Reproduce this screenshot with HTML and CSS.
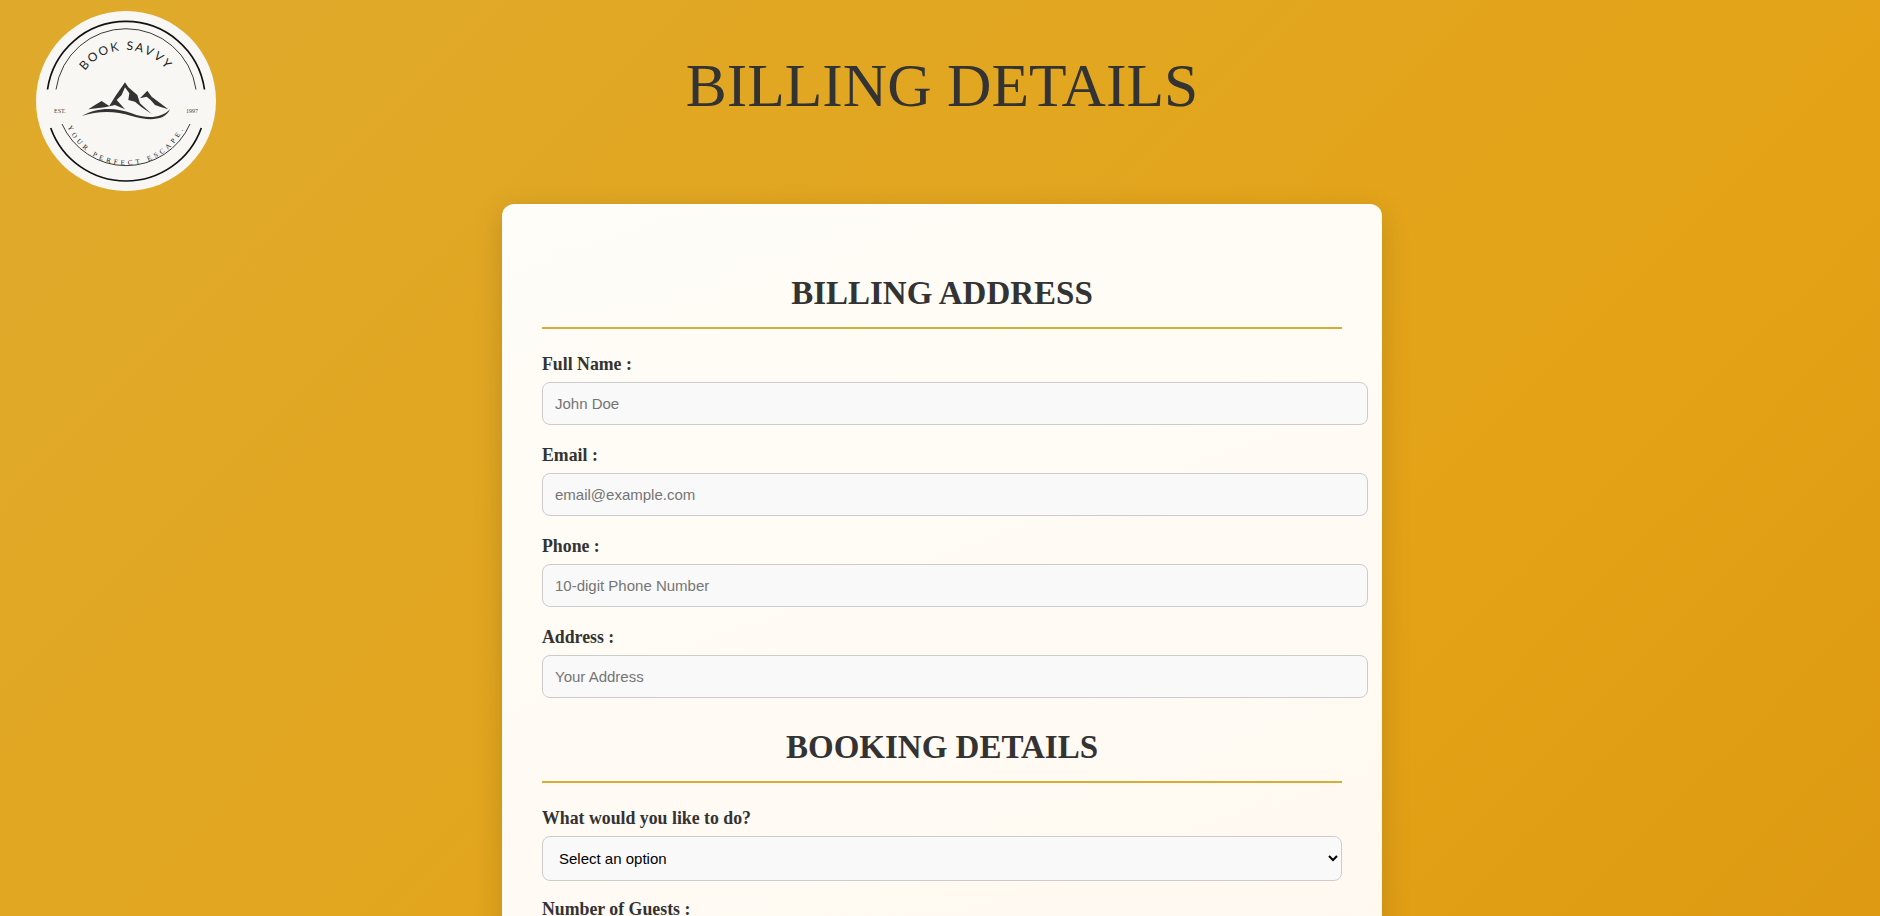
FILE: index.html
```html
<!DOCTYPE html>
<html lang="en">
<head>
<meta charset="utf-8">
<title>Billing Details</title>
<link rel="stylesheet" href="styles.css">
</head>
<body>
<div class="logo">
  <svg viewBox="0 0 180 180" width="180" height="180" class="logo-svg">
    <defs>
      <path id="arcTop" d="M 39 90 A 51 51 0 0 1 141 90"/>
      <path id="arcBottom" d="M 26 90 A 64 64 0 0 0 154 90"/>
    </defs>
    <circle cx="90" cy="90" r="90" fill="#f8f7f4"/>
    <path d="M 11.5 78.5 A 79.3 79.3 0 0 1 168.5 78.5" fill="none" stroke="#111" stroke-width="1.7"/>
    <path d="M 20 78.5 A 70.7 70.7 0 0 1 160 78.5" fill="none" stroke="#222" stroke-width="0.9"/>
    <path d="M 14.7 117 A 80 80 0 0 0 165.3 117" fill="none" stroke="#111" stroke-width="1.7"/>
    <path d="M 26 113 A 70 70 0 0 0 154 113" fill="none" stroke="#222" stroke-width="0.9"/>
    <text class="logo-top"><textPath href="#arcTop" startOffset="50%" text-anchor="middle">BOOK SAVVY</textPath></text>
    <text class="logo-bottom"><textPath href="#arcBottom" startOffset="50%" text-anchor="middle">YOUR PERFECT ESCAPE.</textPath></text>
    <text class="logo-small" x="18" y="101.5">EST.</text>
    <text class="logo-small" x="150" y="101.5">1997</text>
    <g transform="translate(24 39) scale(0.3333)" fill="#333">
      <path d="M85 178 L105 165 L125 153 L135 160 L148 168 L165 140 L195 97 L205 112 L232 135 L240 160 L275 192 L245 172 L225 155 L205 150 L208 130 L195 112 L185 135 L170 150 L195 178 L165 165 L135 172 L110 175 Z"/>
      <path d="M240 145 L262 122 L275 140 L295 155 L325 178 L300 170 L285 165 L272 150 L260 140 Z"/>
      <path d="M65 198 C 110 170 170 172 215 190 C 260 208 305 205 330 178 C 315 215 260 212 215 198 C 165 182 115 182 65 198 Z"/>
    </g>
  </svg>
</div>
<h1 class="page-title">BILLING DETAILS</h1>
<form class="card">
  <h2 class="section-title">BILLING ADDRESS</h2>
  <div class="field"><label class="label" for="name">Full Name :</label><input class="input" id="name" type="text" placeholder="John Doe"></div>
  <div class="field"><label class="label" for="email">Email :</label><input class="input" id="email" type="text" placeholder="email@example.com"></div>
  <div class="field"><label class="label" for="phone">Phone :</label><input class="input" id="phone" type="text" placeholder="10-digit Phone Number"></div>
  <div class="field"><label class="label" for="address">Address :</label><input class="input" id="address" type="text" placeholder="Your Address"></div>
  <h2 class="section-title section-title-next">BOOKING DETAILS</h2>
  <div class="field field-select"><label class="label" for="action">What would you like to do?</label>
    <select class="select" id="action"><option>Select an option</option></select></div>
  <div class="field"><label class="label" for="guests">Number of Guests :</label><input class="input" id="guests" type="text"></div>
</form>
</body>
</html>
```
FILE: styles.css
```css
* { margin: 0; }
html { overflow: hidden; height: 100%; }
body {
  height: 916px;
  padding-left: 4px;
  overflow: hidden;
  background: linear-gradient(135deg, #dfaa2c 0%, #e4a317 70%, #dd9a12 100%);
  font-family: "Liberation Serif", serif;
  color: #333;
  position: relative;
}
.logo { position: absolute; left: 36px; top: 11px; width: 180px; height: 180px; }
.logo-svg { display: block; }
.logo-top { font: 12px Lato, sans-serif; letter-spacing: 2px; fill: #222; }
.logo-bottom { font: 7px "Liberation Serif", serif; letter-spacing: 3.3px; fill: #222; }
.logo-small { font: 6px "Liberation Serif", serif; fill: #444; }
.page-title {
  font-family: "Liberation Serif", serif;
  font-weight: 400;
  font-size: 61.5px;
  line-height: 74px;
  text-align: center;
  padding-top: 48px;
  height: 204px;
  box-sizing: border-box;
  color: #333;
}
.card {
  width: 880px;
  margin: 0 auto;
  padding: 70px 40px 40px;
  box-sizing: border-box;
  background: linear-gradient(160deg, #fffdf8, #fff8f0);
  border-radius: 12px;
  box-shadow: 0 8px 30px rgba(0, 0, 0, 0.15);
}
.section-title {
  font-family: "Liberation Serif", serif;
  font-weight: 700;
  font-size: 33px;
  line-height: 38px;
  text-align: center;
  color: #333;
  padding-bottom: 15px;
  border-bottom: 2px solid #d4af37;
  margin-bottom: 25px;
}
.section-title-next { margin-top: 30px; }
.field { margin-bottom: 20px; }
.field-select { margin-bottom: 18px; }
.label {
  display: block;
  font-family: "Liberation Serif", serif;
  font-weight: 700;
  font-size: 17.8px;
  line-height: 21px;
  margin-bottom: 7px;
  color: #333;
}
.input {
  display: block;
  width: 800px;
  height: 41px;
  padding: 0 12px;
  box-sizing: content-box;
  background: #f9f9f9;
  border: 1px solid #ccc;
  border-radius: 8px;
  font-family: "Liberation Sans", sans-serif;
  font-size: 15px;
  outline: none;
}
.input::placeholder { color: #757575; }
.select {
  display: block;
  width: 800px;
  height: 45px;
  padding: 0 12px;
  background: #f9f9f9;
  border: 1px solid #ccc;
  border-radius: 8px;
  font-family: "Liberation Sans", sans-serif;
  font-size: 15px;
  color: #000;
}
```
